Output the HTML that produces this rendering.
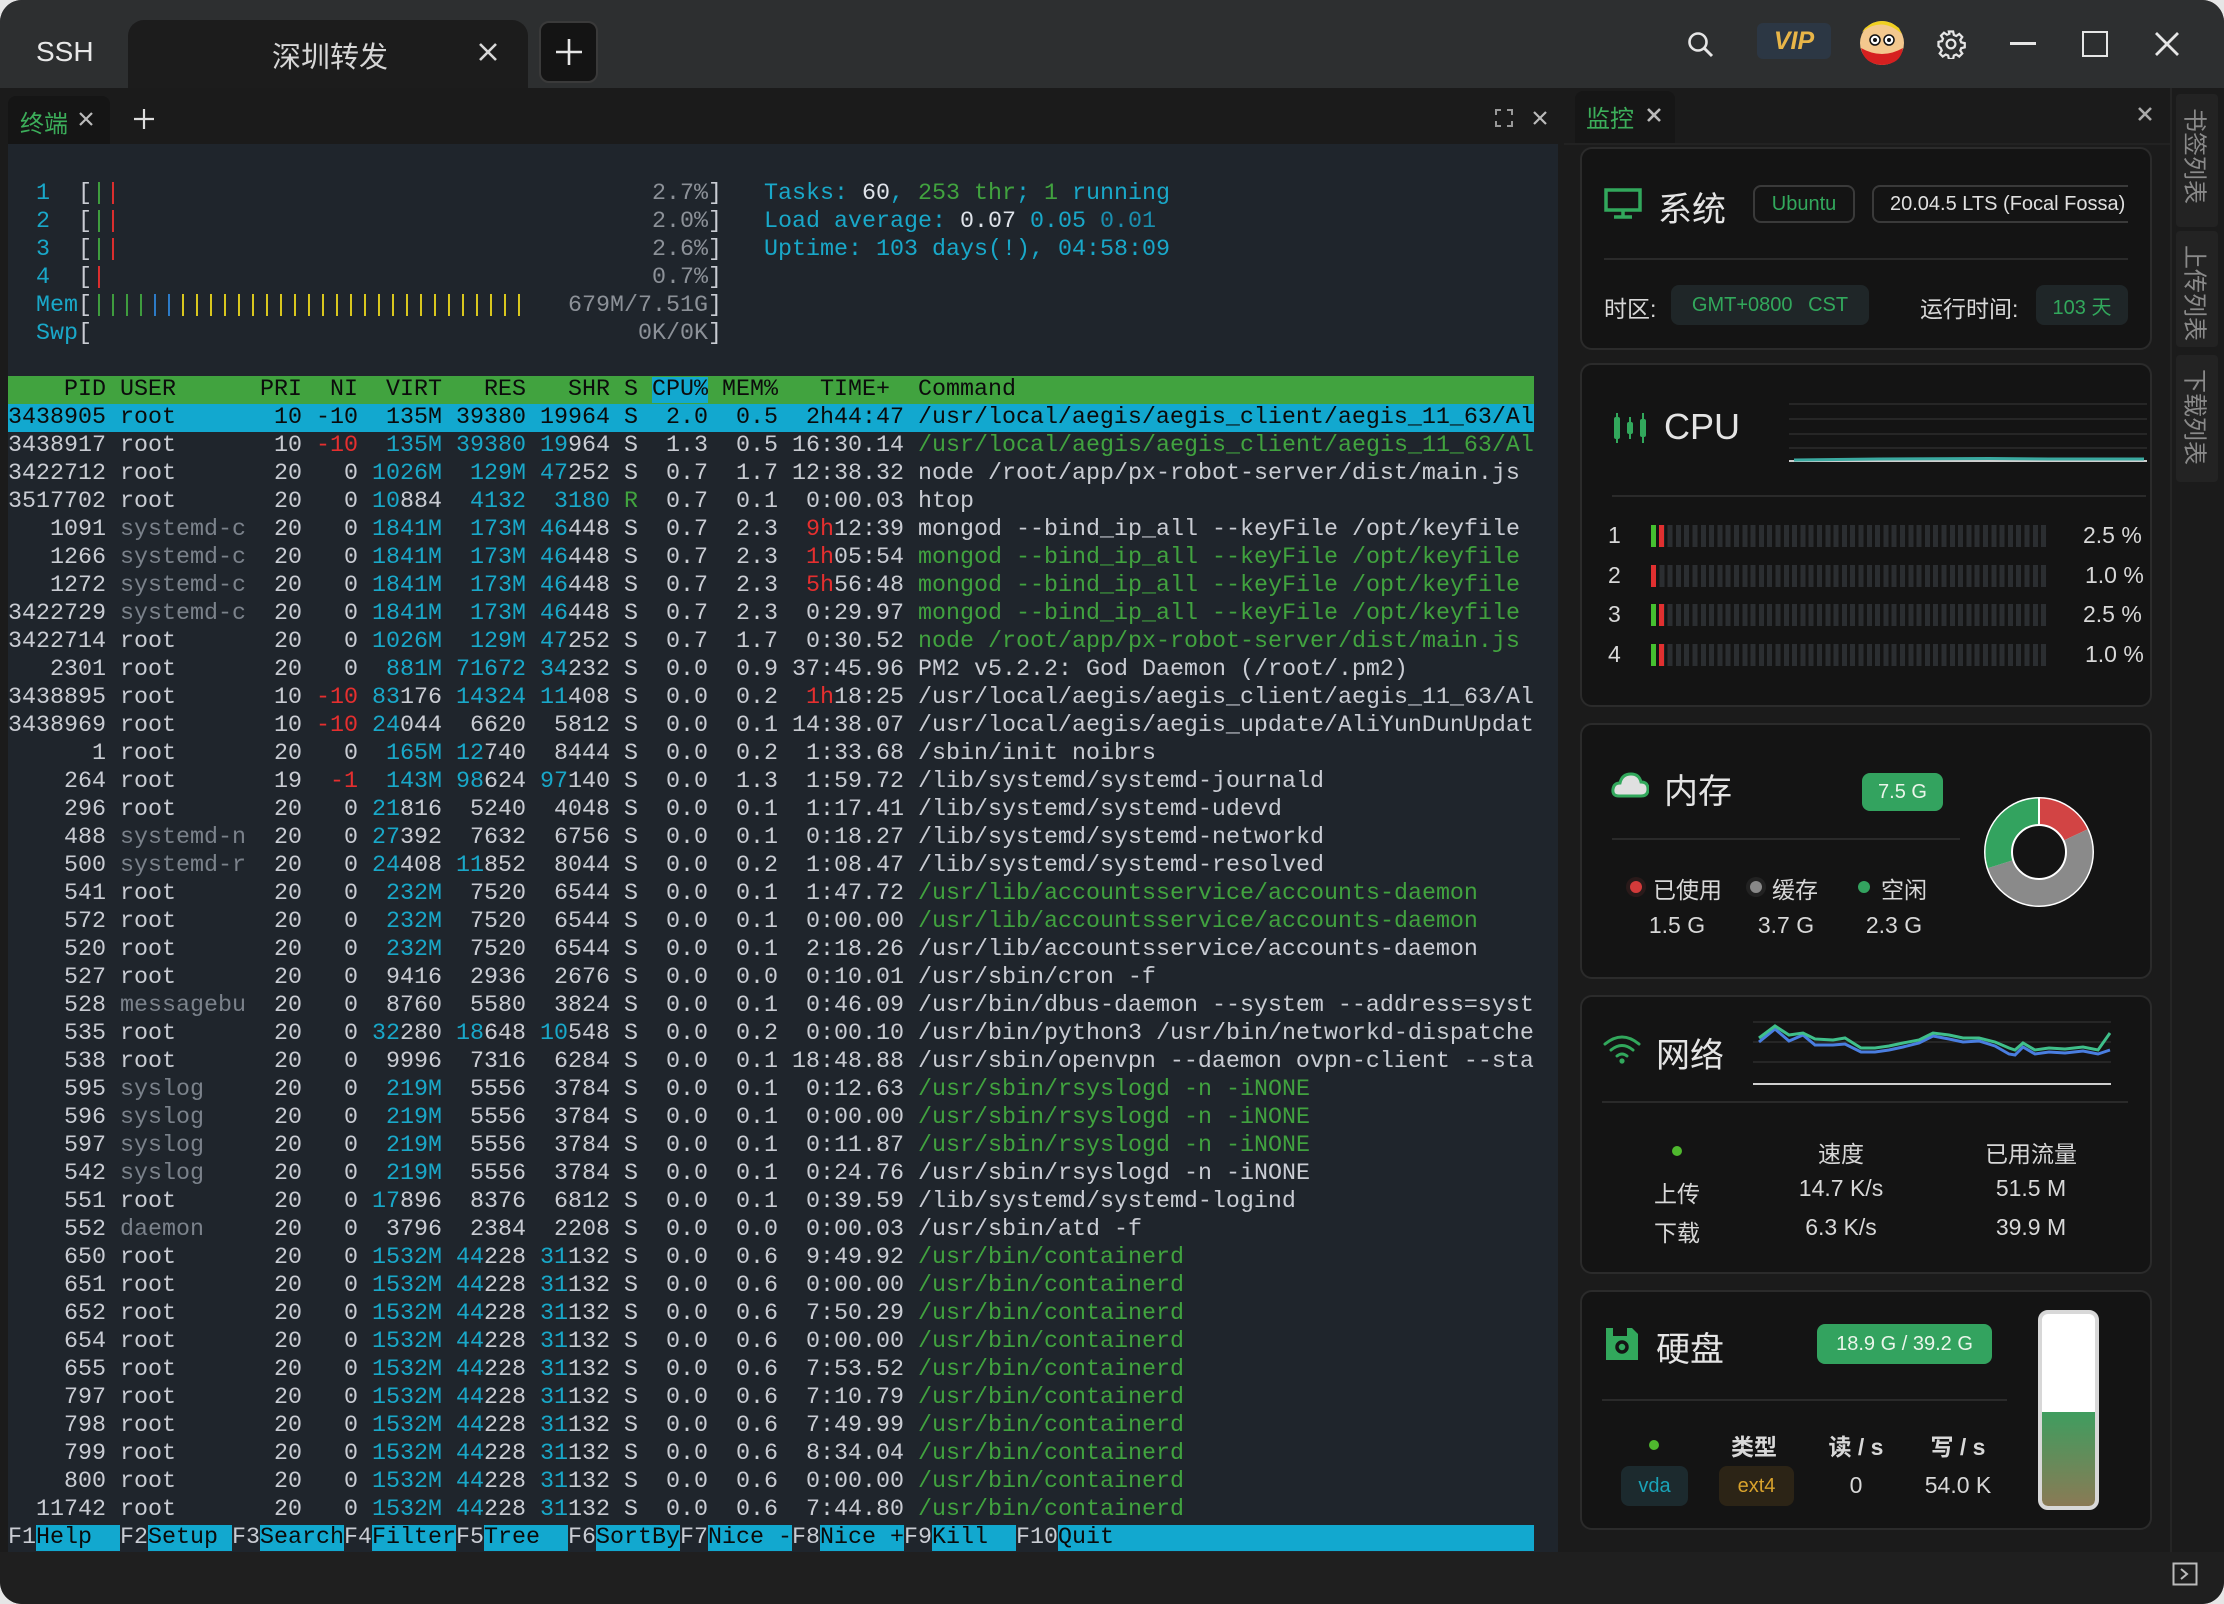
<!DOCTYPE html>
<html><head><meta charset="utf-8">
<style>
*{margin:0;padding:0;box-sizing:border-box}
body{width:2224px;height:1604px;background:#e6e6e6;overflow:hidden;font-family:"Liberation Sans","Noto Sans CJK SC",sans-serif}
.win{position:absolute;left:0;top:0;width:2224px;height:1604px;border-radius:22px;overflow:hidden;background:#1b1b1b}
.abs{position:absolute}
.topbar{left:0;top:0;width:2224px;height:88px;background:#2d2f30}
.term{left:8px;top:144px;width:1550px;height:1408px;background:#1f252c}
.tx{position:absolute;left:8px;top:180px;font-family:"Liberation Mono",monospace;font-size:23.33px;line-height:28px;color:#c9ccd3}
.tx div{height:28px;white-space:pre}
.c{color:#19a8c9}.g{color:#41a33f}.r{color:#e52f2f}.d{color:#7b828b}.y{color:#e3cf1e}.b{color:#2e7fd0}.p{color:#8c9198}.w{color:#dfe3ea}
.hd{background:#41a33f;color:#0c0c0c;width:1526px}
.hl{background:#12a8cf;color:#0a0a0a;width:1526px}
.cb{background:#12a8cf}
.fk{color:#c9ccd3}.fl{background:#12a8cf;color:#0a0a0a}
.card{position:absolute;left:1580px;width:572px;background:#141414;border:2px solid #2b2b2b;border-radius:12px}
.ttl{position:absolute;color:#e4e4e4;font-size:34px}
.pill{position:absolute;border-radius:8px;font-size:20px;display:flex;align-items:center;justify-content:center}
.lbl{position:absolute;color:#d8d8d8;font-size:23px;white-space:nowrap}
.hr{position:absolute;height:2px;background:#2a2a2a}
.bars{position:absolute;left:1651px;width:397px;height:22px;background:repeating-linear-gradient(90deg,#2b2e31 0 5px,transparent 5px 8.3px)}
.side{position:absolute;left:2176px;width:42px;background:#232323;border-radius:4px;color:#8a8a8a;font-size:24px;writing-mode:vertical-rl;text-orientation:sideways;display:flex;align-items:center;padding-top:14px}
.ctr{position:absolute;transform:translateX(-50%);white-space:nowrap}
</style></head><body>
<div class="win">
<div class="abs topbar"></div>
<div class="abs" style="left:36px;top:36px;color:#e8e8e8;font-size:28px">SSH</div>
<div class="abs" style="left:128px;top:20px;width:400px;height:68px;background:#1c1c1c;border-radius:16px 16px 0 0"></div>
<div class="abs" style="left:272px;top:34px;color:#d6d6d6;font-size:29px">深圳转发</div>
<svg class="abs" style="left:478px;top:42px" width="20" height="20"><path d="M2 2L18 18M18 2L2 18" stroke="#d8d8d8" stroke-width="2.6"/></svg>
<div class="abs" style="left:539px;top:21px;width:59px;height:62px;background:#141414;border:2px solid #3a3a3a;border-radius:10px"></div>
<svg class="abs" style="left:554px;top:37px" width="30" height="30"><path d="M15 2V28M2 15H28" stroke="#e6e6e6" stroke-width="2.6"/></svg>
<svg class="abs" style="left:1686px;top:30px" width="30" height="30"><circle cx="12" cy="12" r="8.5" stroke="#e6e6e6" stroke-width="2.6" fill="none"/><path d="M18 18L26 26" stroke="#e6e6e6" stroke-width="3"/></svg>
<div class="abs" style="left:1757px;top:23px;width:74px;height:36px;background:#2c3744;border-radius:6px;color:#e8b548;font-weight:bold;font-style:italic;font-size:25px;text-align:center;line-height:36px">VIP</div>
<svg class="abs" style="left:1859px;top:20px" width="46" height="46"><circle cx="23" cy="23" r="22" fill="#f3c88e"/><path d="M3 12Q23 -4 43 14L40 8Q23 -6 6 8Z" fill="#f0d020"/><path d="M2 28Q23 40 44 28Q42 44 23 45Q5 44 2 28Z" fill="#d62020"/><circle cx="16" cy="20" r="5" fill="#fff" stroke="#111" stroke-width="1.5"/><circle cx="30" cy="20" r="5" fill="#fff" stroke="#111" stroke-width="1.5"/><circle cx="16" cy="20" r="2" fill="#111"/><circle cx="30" cy="20" r="2" fill="#111"/></svg>
<svg class="abs" style="left:1936px;top:29px" width="30" height="30" viewBox="0 0 24 24"><path fill="none" stroke="#e6e6e6" stroke-width="1.8" d="M10.3 2h3.4l.6 2.8 1.9.8 2.4-1.6 2.4 2.4-1.6 2.4.8 1.9 2.8.6v3.4l-2.8.6-.8 1.9 1.6 2.4-2.4 2.4-2.4-1.6-1.9.8-.6 2.8h-3.4l-.6-2.8-1.9-.8-2.4 1.6-2.4-2.4 1.6-2.4-.8-1.9L2 13.7v-3.4l2.8-.6.8-1.9L4 5.4 6.4 3l2.4 1.6 1.9-.8z"/><circle cx="12" cy="12" r="3.5" fill="none" stroke="#e6e6e6" stroke-width="1.8"/></svg>
<div class="abs" style="left:2010px;top:42px;width:26px;height:3px;background:#e6e6e6"></div>
<div class="abs" style="left:2082px;top:31px;width:26px;height:26px;border:2.6px solid #e6e6e6"></div>
<svg class="abs" style="left:2154px;top:31px" width="26" height="26"><path d="M2 2L24 24M24 2L2 24" stroke="#e6e6e6" stroke-width="2.8"/></svg>

<div class="abs" style="left:8px;top:96px;width:102px;height:48px;background:#151515;border-radius:8px 8px 0 0"></div>
<div class="abs" style="left:20px;top:104px;color:#3cae5a;font-size:24px">终端</div>
<svg class="abs" style="left:78px;top:111px" width="16" height="16"><path d="M2 2L14 14M14 2L2 14" stroke="#bbb" stroke-width="2.2"/></svg>
<svg class="abs" style="left:132px;top:107px" width="24" height="24"><path d="M12 2V22M2 12H22" stroke="#ddd" stroke-width="2.2"/></svg>
<svg class="abs" style="left:1495px;top:109px" width="18" height="18"><path d="M1 6V1H6M12 1H17V6M17 12V17H12M6 17H1V12" stroke="#999" stroke-width="2" fill="none"/></svg>
<svg class="abs" style="left:1532px;top:110px" width="16" height="16"><path d="M2 2L14 14M14 2L2 14" stroke="#bbb" stroke-width="2.2"/></svg>

<div class="abs term"></div>
<div class="tx"><div>  <span class="c">1</span>  [<span class="g">|</span><span class="r">|</span>                                      <span class="p">2.7%</span>]   <span class="c">Tasks: </span><span class="w">60</span><span class="c">, </span><span class="g">253 thr</span><span class="c">; </span><span class="g">1</span><span class="c"> running</span></div><div>  <span class="c">2</span>  [<span class="g">|</span><span class="r">|</span>                                      <span class="p">2.0%</span>]   <span class="c">Load average: </span><span class="w">0.07 </span><span class="c">0.05 </span><span class="c" style="color:#1a8fb0">0.01</span></div><div>  <span class="c">3</span>  [<span class="g">|</span><span class="r">|</span>                                      <span class="p">2.6%</span>]   <span class="c">Uptime: 103 days(!), 04:58:09</span></div><div>  <span class="c">4</span>  [<span class="r">|</span>                                       <span class="p">0.7%</span>]</div><div>  <span class="c">Mem</span>[<span class="g">||||</span><span class="b">||</span><span class="y">|||||||||||||||||||||||||</span>   <span class="p">679M/7.51G</span>]</div><div>  <span class="c">Swp</span>[                                       <span class="p">0K/0K</span>]</div><div> </div><div class="hd">    PID USER      PRI  NI  VIRT   RES   SHR S <span class="cb">CPU%</span> MEM%   TIME+  Command                                            </div><div class="hl">3438905 root       10 -10  135M 39380 19964 S  2.0  0.5  2h44:47 /usr/local/aegis/aegis_client/aegis_11_63/Al</div><div>3438917 root       10 <span class="r">-10</span>  <span class="c">135M</span> <span class="c">39380</span> <span class="c">19</span>964 S  1.3  0.5 16:30.14 <span class="g">/usr/local/aegis/aegis_client/aegis_11_63/Al</span></div><div>3422712 root       20   0 <span class="c">1026M</span>  <span class="c">129M</span> <span class="c">47</span>252 S  0.7  1.7 12:38.32 node /root/app/px-robot-server/dist/main.js</div><div>3517702 root       20   0 <span class="c">10</span>884  <span class="c">4132</span>  <span class="c">3180</span> <span class="g">R</span>  0.7  0.1  0:00.03 htop</div><div>   1091 <span class="d">systemd-c</span>  20   0 <span class="c">1841M</span>  <span class="c">173M</span> <span class="c">46</span>448 S  0.7  2.3  <span class="r">9h</span>12:39 mongod --bind_ip_all --keyFile /opt/keyfile</div><div>   1266 <span class="d">systemd-c</span>  20   0 <span class="c">1841M</span>  <span class="c">173M</span> <span class="c">46</span>448 S  0.7  2.3  <span class="r">1h</span>05:54 <span class="g">mongod --bind_ip_all --keyFile /opt/keyfile</span></div><div>   1272 <span class="d">systemd-c</span>  20   0 <span class="c">1841M</span>  <span class="c">173M</span> <span class="c">46</span>448 S  0.7  2.3  <span class="r">5h</span>56:48 <span class="g">mongod --bind_ip_all --keyFile /opt/keyfile</span></div><div>3422729 <span class="d">systemd-c</span>  20   0 <span class="c">1841M</span>  <span class="c">173M</span> <span class="c">46</span>448 S  0.7  2.3  0:29.97 <span class="g">mongod --bind_ip_all --keyFile /opt/keyfile</span></div><div>3422714 root       20   0 <span class="c">1026M</span>  <span class="c">129M</span> <span class="c">47</span>252 S  0.7  1.7  0:30.52 <span class="g">node /root/app/px-robot-server/dist/main.js</span></div><div>   2301 root       20   0  <span class="c">881M</span> <span class="c">71672</span> <span class="c">34</span>232 S  0.0  0.9 37:45.96 PM2 v5.2.2: God Daemon (/root/.pm2)</div><div>3438895 root       10 <span class="r">-10</span> <span class="c">83</span>176 <span class="c">14324</span> <span class="c">11</span>408 S  0.0  0.2  <span class="r">1h</span>18:25 /usr/local/aegis/aegis_client/aegis_11_63/Al</div><div>3438969 root       10 <span class="r">-10</span> <span class="c">24</span>044  6620  5812 S  0.0  0.1 14:38.07 /usr/local/aegis/aegis_update/AliYunDunUpdat</div><div>      1 root       20   0  <span class="c">165M</span> <span class="c">12</span>740  8444 S  0.0  0.2  1:33.68 /sbin/init noibrs</div><div>    264 root       19  <span class="r">-1</span>  <span class="c">143M</span> <span class="c">98</span>624 <span class="c">97</span>140 S  0.0  1.3  1:59.72 /lib/systemd/systemd-journald</div><div>    296 root       20   0 <span class="c">21</span>816  5240  4048 S  0.0  0.1  1:17.41 /lib/systemd/systemd-udevd</div><div>    488 <span class="d">systemd-n</span>  20   0 <span class="c">27</span>392  7632  6756 S  0.0  0.1  0:18.27 /lib/systemd/systemd-networkd</div><div>    500 <span class="d">systemd-r</span>  20   0 <span class="c">24</span>408 <span class="c">11</span>852  8044 S  0.0  0.2  1:08.47 /lib/systemd/systemd-resolved</div><div>    541 root       20   0  <span class="c">232M</span>  7520  6544 S  0.0  0.1  1:47.72 <span class="g">/usr/lib/accountsservice/accounts-daemon</span></div><div>    572 root       20   0  <span class="c">232M</span>  7520  6544 S  0.0  0.1  0:00.00 <span class="g">/usr/lib/accountsservice/accounts-daemon</span></div><div>    520 root       20   0  <span class="c">232M</span>  7520  6544 S  0.0  0.1  2:18.26 /usr/lib/accountsservice/accounts-daemon</div><div>    527 root       20   0  9416  2936  2676 S  0.0  0.0  0:10.01 /usr/sbin/cron -f</div><div>    528 <span class="d">messagebu</span>  20   0  8760  5580  3824 S  0.0  0.1  0:46.09 /usr/bin/dbus-daemon --system --address=syst</div><div>    535 root       20   0 <span class="c">32</span>280 <span class="c">18</span>648 <span class="c">10</span>548 S  0.0  0.2  0:00.10 /usr/bin/python3 /usr/bin/networkd-dispatche</div><div>    538 root       20   0  9996  7316  6284 S  0.0  0.1 18:48.88 /usr/sbin/openvpn --daemon ovpn-client --sta</div><div>    595 <span class="d">syslog</span>     20   0  <span class="c">219M</span>  5556  3784 S  0.0  0.1  0:12.63 <span class="g">/usr/sbin/rsyslogd -n -iNONE</span></div><div>    596 <span class="d">syslog</span>     20   0  <span class="c">219M</span>  5556  3784 S  0.0  0.1  0:00.00 <span class="g">/usr/sbin/rsyslogd -n -iNONE</span></div><div>    597 <span class="d">syslog</span>     20   0  <span class="c">219M</span>  5556  3784 S  0.0  0.1  0:11.87 <span class="g">/usr/sbin/rsyslogd -n -iNONE</span></div><div>    542 <span class="d">syslog</span>     20   0  <span class="c">219M</span>  5556  3784 S  0.0  0.1  0:24.76 /usr/sbin/rsyslogd -n -iNONE</div><div>    551 root       20   0 <span class="c">17</span>896  8376  6812 S  0.0  0.1  0:39.59 /lib/systemd/systemd-logind</div><div>    552 <span class="d">daemon</span>     20   0  3796  2384  2208 S  0.0  0.0  0:00.03 /usr/sbin/atd -f</div><div>    650 root       20   0 <span class="c">1532M</span> <span class="c">44</span>228 <span class="c">31</span>132 S  0.0  0.6  9:49.92 <span class="g">/usr/bin/containerd</span></div><div>    651 root       20   0 <span class="c">1532M</span> <span class="c">44</span>228 <span class="c">31</span>132 S  0.0  0.6  0:00.00 <span class="g">/usr/bin/containerd</span></div><div>    652 root       20   0 <span class="c">1532M</span> <span class="c">44</span>228 <span class="c">31</span>132 S  0.0  0.6  7:50.29 <span class="g">/usr/bin/containerd</span></div><div>    654 root       20   0 <span class="c">1532M</span> <span class="c">44</span>228 <span class="c">31</span>132 S  0.0  0.6  0:00.00 <span class="g">/usr/bin/containerd</span></div><div>    655 root       20   0 <span class="c">1532M</span> <span class="c">44</span>228 <span class="c">31</span>132 S  0.0  0.6  7:53.52 <span class="g">/usr/bin/containerd</span></div><div>    797 root       20   0 <span class="c">1532M</span> <span class="c">44</span>228 <span class="c">31</span>132 S  0.0  0.6  7:10.79 <span class="g">/usr/bin/containerd</span></div><div>    798 root       20   0 <span class="c">1532M</span> <span class="c">44</span>228 <span class="c">31</span>132 S  0.0  0.6  7:49.99 <span class="g">/usr/bin/containerd</span></div><div>    799 root       20   0 <span class="c">1532M</span> <span class="c">44</span>228 <span class="c">31</span>132 S  0.0  0.6  8:34.04 <span class="g">/usr/bin/containerd</span></div><div>    800 root       20   0 <span class="c">1532M</span> <span class="c">44</span>228 <span class="c">31</span>132 S  0.0  0.6  0:00.00 <span class="g">/usr/bin/containerd</span></div><div>  11742 root       20   0 <span class="c">1532M</span> <span class="c">44</span>228 <span class="c">31</span>132 S  0.0  0.6  7:44.80 <span class="g">/usr/bin/containerd</span></div><div><span class="fk">F1</span><span class="fl">Help  </span><span class="fk">F2</span><span class="fl">Setup </span><span class="fk">F3</span><span class="fl">Search</span><span class="fk">F4</span><span class="fl">Filter</span><span class="fk">F5</span><span class="fl">Tree  </span><span class="fk">F6</span><span class="fl">SortBy</span><span class="fk">F7</span><span class="fl">Nice -</span><span class="fk">F8</span><span class="fl">Nice +</span><span class="fk">F9</span><span class="fl">Kill  </span><span class="fk">F10</span><span class="fl">Quit                              </span></div></div>

<div class="abs" style="left:0;top:1552px;width:2224px;height:52px;background:#1f1f1f"></div>
<svg class="abs" style="left:2172px;top:1562px" width="26" height="24"><rect x="1.5" y="1.5" width="23" height="21" fill="none" stroke="#bbb" stroke-width="2"/><path d="M9 7L15 12L9 17" stroke="#bbb" stroke-width="2" fill="none"/></svg>

<div class="abs" style="left:1564px;top:88px;width:606px;height:1464px;background:#1b1b1b"></div>
<div class="abs" style="left:1575px;top:91px;width:100px;height:52px;background:#161616;border-radius:8px 8px 0 0"></div>
<div class="abs" style="left:1586px;top:99px;color:#3cae5a;font-size:24px">监控</div>
<svg class="abs" style="left:1646px;top:107px" width="16" height="16"><path d="M2 2L14 14M14 2L2 14" stroke="#bbb" stroke-width="2.6"/></svg>
<svg class="abs" style="left:2137px;top:106px" width="16" height="16"><path d="M2 2L14 14M14 2L2 14" stroke="#aaa" stroke-width="2.6"/></svg>
<div class="abs" style="left:1564px;top:143px;width:606px;height:2px;background:#222"></div>

<div class="card" style="top:147px;height:203px"></div>
<svg class="abs" style="left:1604px;top:188px" width="38" height="32"><rect x="2" y="2" width="34" height="20" fill="none" stroke="#32a85c" stroke-width="3.5"/><path d="M19 22V29M10 29H28" stroke="#32a85c" stroke-width="3.5"/></svg>
<div class="ttl" style="left:1658px;top:182px">系统</div>
<div class="pill" style="left:1753px;top:185px;width:102px;height:38px;border:2px solid #3a3a3a;color:#32a85c">Ubuntu</div>
<div class="pill" style="left:1872px;top:185px;width:256px;height:38px;border:2px solid #3a3a3a;border-right:none;border-radius:8px 0 0 8px;color:#e0e0e0;justify-content:flex-start;padding-left:16px;overflow:hidden;white-space:nowrap">20.04.5 LTS (Focal Fossa)</div>
<div class="hr" style="left:1604px;top:258px;width:524px"></div>
<div class="lbl" style="left:1604px;top:290px">时区:</div>
<div class="pill" style="left:1671px;top:285px;width:198px;height:40px;background:#1f2628;color:#32a85c;word-spacing:10px">GMT+0800 CST</div>
<div class="lbl" style="left:1920px;top:290px">运行时间:</div>
<div class="pill" style="left:2036px;top:285px;width:92px;height:40px;background:#1f2628;color:#32a85c">103 天</div>

<div class="card" style="top:363px;height:344px"></div>
<svg class="abs" style="left:1613px;top:413px" width="34" height="30"><rect x="1" y="4" width="6" height="22" rx="2" fill="#32a85c"/><path d="M4 0V30" stroke="#32a85c" stroke-width="2"/><rect x="14" y="9" width="6" height="12" rx="2" fill="#32a85c"/><path d="M17 4V26" stroke="#32a85c" stroke-width="2"/><rect x="27" y="6" width="6" height="18" rx="2" fill="#32a85c"/><path d="M30 0V30" stroke="#32a85c" stroke-width="2"/></svg>
<div class="ttl" style="left:1664px;top:406px;font-size:36px">CPU</div>
<svg class="abs" style="left:1789px;top:400px" width="358" height="64"><g stroke="#2c2c2c" stroke-width="1.5"><path d="M0 4H358M0 19H358M0 34H358M0 48H358"/></g><path d="M0 61H358" stroke="#cfcfcf" stroke-width="2"/><path d="M5 60L90 59L200 58.5L260 59L355 59" stroke="#3aa9a0" stroke-width="3" fill="none"/></svg>
<div class="hr" style="left:1612px;top:495px;width:534px"></div>
<div class="lbl" style="left:1608px;top:522px">1</div><div class="bars" style="top:525px"></div><div class="abs" style="left:1651px;top:525px;width:5px;height:22px;background:#45c030"></div><div class="abs" style="left:1659px;top:525px;width:5px;height:22px;background:#e03030"></div><div class="lbl" style="left:2083px;top:522px">2.5 %</div>
<div class="lbl" style="left:1608px;top:562px">2</div><div class="bars" style="top:565px"></div><div class="abs" style="left:1651px;top:565px;width:5px;height:22px;background:#e03030"></div><div class="lbl" style="left:2085px;top:562px">1.0 %</div>
<div class="lbl" style="left:1608px;top:601px">3</div><div class="bars" style="top:604px"></div><div class="abs" style="left:1651px;top:604px;width:5px;height:22px;background:#45c030"></div><div class="abs" style="left:1659px;top:604px;width:5px;height:22px;background:#e03030"></div><div class="lbl" style="left:2083px;top:601px">2.5 %</div>
<div class="lbl" style="left:1608px;top:641px">4</div><div class="bars" style="top:644px"></div><div class="abs" style="left:1651px;top:644px;width:5px;height:22px;background:#45c030"></div><div class="abs" style="left:1659px;top:644px;width:5px;height:22px;background:#e03030"></div><div class="lbl" style="left:2085px;top:641px">1.0 %</div>

<div class="card" style="top:723px;height:256px"></div>
<svg class="abs" style="left:1611px;top:770px" width="38" height="28"><path d="M8 26Q1 26 2 19Q3 13 9 13Q11 4 20 4Q28 4 30 12Q37 12 37 19Q37 26 30 26Z" fill="#e0e0e0" stroke="#32a85c" stroke-width="3"/></svg>
<div class="ttl" style="left:1664px;top:764px">内存</div>
<div class="pill" style="left:1862px;top:773px;width:81px;height:38px;background:#33a35f;color:#eaf5ea">7.5 G</div>
<div class="hr" style="left:1612px;top:838px;width:348px"></div>
<svg class="abs" style="left:1981px;top:794px" width="116" height="116"><circle cx="58" cy="58" r="55" fill="#fff"/><g transform="rotate(-90 58 58)" fill="none" stroke-width="26"><circle cx="58" cy="58" r="40.5" stroke="#d24444" stroke-dasharray="45.8 300"/><circle cx="58" cy="58" r="40.5" stroke="#8a8a8a" stroke-dasharray="0 45.8 132.3 300"/><circle cx="58" cy="58" r="40.5" stroke="#33a35f" stroke-dasharray="0 178.1 76.4 300"/></g><circle cx="58" cy="58" r="27" fill="#141414" stroke="#fff" stroke-width="2"/><path d="M58 3V31" stroke="#fff" stroke-width="2"/></svg>
<div class="abs" style="left:1630px;top:881px;width:12px;height:12px;border-radius:6px;background:#d33a3a;box-shadow:0 0 0 4px #2a1a1a"></div>
<div class="lbl" style="left:1653px;top:871px">已使用</div>
<div class="abs" style="left:1750px;top:881px;width:12px;height:12px;border-radius:6px;background:#888;box-shadow:0 0 0 4px #222"></div>
<div class="lbl" style="left:1772px;top:871px">缓存</div>
<div class="abs" style="left:1858px;top:881px;width:12px;height:12px;border-radius:6px;background:#33a35f"></div>
<div class="lbl" style="left:1881px;top:871px">空闲</div>
<div class="lbl ctr" style="left:1677px;top:912px">1.5 G</div>
<div class="lbl ctr" style="left:1786px;top:912px">3.7 G</div>
<div class="lbl ctr" style="left:1894px;top:912px">2.3 G</div>

<div class="card" style="top:995px;height:279px"></div>
<svg class="abs" style="left:1603px;top:1034px" width="38" height="30"><g fill="none" stroke="#32a85c" stroke-width="3" stroke-linecap="round"><path d="M2 10Q19 -4 36 10"/><path d="M8 16Q19 7 30 16"/><path d="M14 22Q19 18 24 22"/></g><circle cx="19" cy="27" r="2.6" fill="#32a85c"/></svg>
<div class="ttl" style="left:1656px;top:1028px">网络</div>
<svg class="abs" style="left:1753px;top:1018px" width="358" height="70"><g stroke="#2c2c2c" stroke-width="1.5"><path d="M0 4H358M0 24H358M0 44H358"/></g><path d="M0 66H358" stroke="#cfcfcf" stroke-width="2"/>
<polyline fill="none" stroke="#4a7ee0" stroke-width="3" points="6,24 22,11 36,23 50,17 62,27 80,27 92,26 108,34 122,34 136,32 150,29 166,25 180,18 196,21 210,24 226,23 242,28 256,36 262,37 270,29 282,36 296,34 312,35 330,33 345,36 357,32"/>
<polyline fill="none" stroke="#3fbf8a" stroke-width="3" points="6,20 22,8 36,17 50,15 62,21 80,22 92,20 108,30 122,30 136,28 150,25 166,22 180,15 196,17 210,20 226,20 242,24 256,30 262,32 270,25 282,32 296,30 312,31 330,29 345,32 357,15"/></svg>
<div class="hr" style="left:1602px;top:1101px;width:526px"></div>
<div class="abs" style="left:1672px;top:1146px;width:10px;height:10px;border-radius:5px;background:#4fb82e"></div>
<div class="lbl ctr" style="left:1841px;top:1135px">速度</div>
<div class="lbl ctr" style="left:2031px;top:1135px">已用流量</div>
<div class="lbl ctr" style="left:1677px;top:1175px">上传</div>
<div class="lbl ctr" style="left:1841px;top:1175px">14.7 K/s</div>
<div class="lbl ctr" style="left:2031px;top:1175px">51.5 M</div>
<div class="lbl ctr" style="left:1677px;top:1214px">下载</div>
<div class="lbl ctr" style="left:1841px;top:1214px">6.3 K/s</div>
<div class="lbl ctr" style="left:2031px;top:1214px">39.9 M</div>

<div class="card" style="top:1290px;height:240px"></div>
<svg class="abs" style="left:1606px;top:1328px" width="32" height="32"><path d="M0 0H26L32 6V32H0Z" fill="#32a85c"/><rect x="7" y="0" width="14" height="8" fill="#141414"/><circle cx="16" cy="19" r="5" fill="none" stroke="#141414" stroke-width="3.5"/></svg>
<div class="ttl" style="left:1656px;top:1322px">硬盘</div>
<div class="pill" style="left:1817px;top:1324px;width:175px;height:40px;background:#33a35f;color:#eaf5ea">18.9 G / 39.2 G</div>
<div class="hr" style="left:1602px;top:1399px;width:405px"></div>
<div class="abs" style="left:1649px;top:1440px;width:10px;height:10px;border-radius:5px;background:#4fb82e"></div>
<div class="lbl ctr" style="left:1754px;top:1428px;font-weight:bold">类型</div>
<div class="lbl ctr" style="left:1856px;top:1428px;font-weight:bold">读 / s</div>
<div class="lbl ctr" style="left:1958px;top:1428px;font-weight:bold">写 / s</div>
<div class="pill" style="left:1621px;top:1466px;width:67px;height:40px;background:#1c2a2e;color:#1aa3b8">vda</div>
<div class="pill" style="left:1719px;top:1466px;width:75px;height:40px;background:#2c2416;color:#d8a22c">ext4</div>
<div class="lbl ctr" style="left:1856px;top:1472px">0</div>
<div class="lbl ctr" style="left:1958px;top:1472px">54.0 K</div>
<div class="abs" style="left:2038px;top:1310px;width:61px;height:200px;border:4px solid #d8d8d8;border-radius:10px;background:#fff;overflow:hidden"><div style="position:absolute;left:0;right:0;bottom:0;height:94px;background:linear-gradient(#3f9d5f,#8a7a55);border-radius:0 0 6px 6px"></div></div>

<div class="abs" style="left:2170px;top:88px;width:54px;height:1464px;background:#1b1b1b;border-left:2px solid #252525"></div>
<div class="side" style="top:94px;height:133px">书签列表</div>
<div class="side" style="top:231px;height:116px">上传列表</div>
<div class="side" style="top:355px;height:127px">下载列表</div>
</div>
</body></html>
